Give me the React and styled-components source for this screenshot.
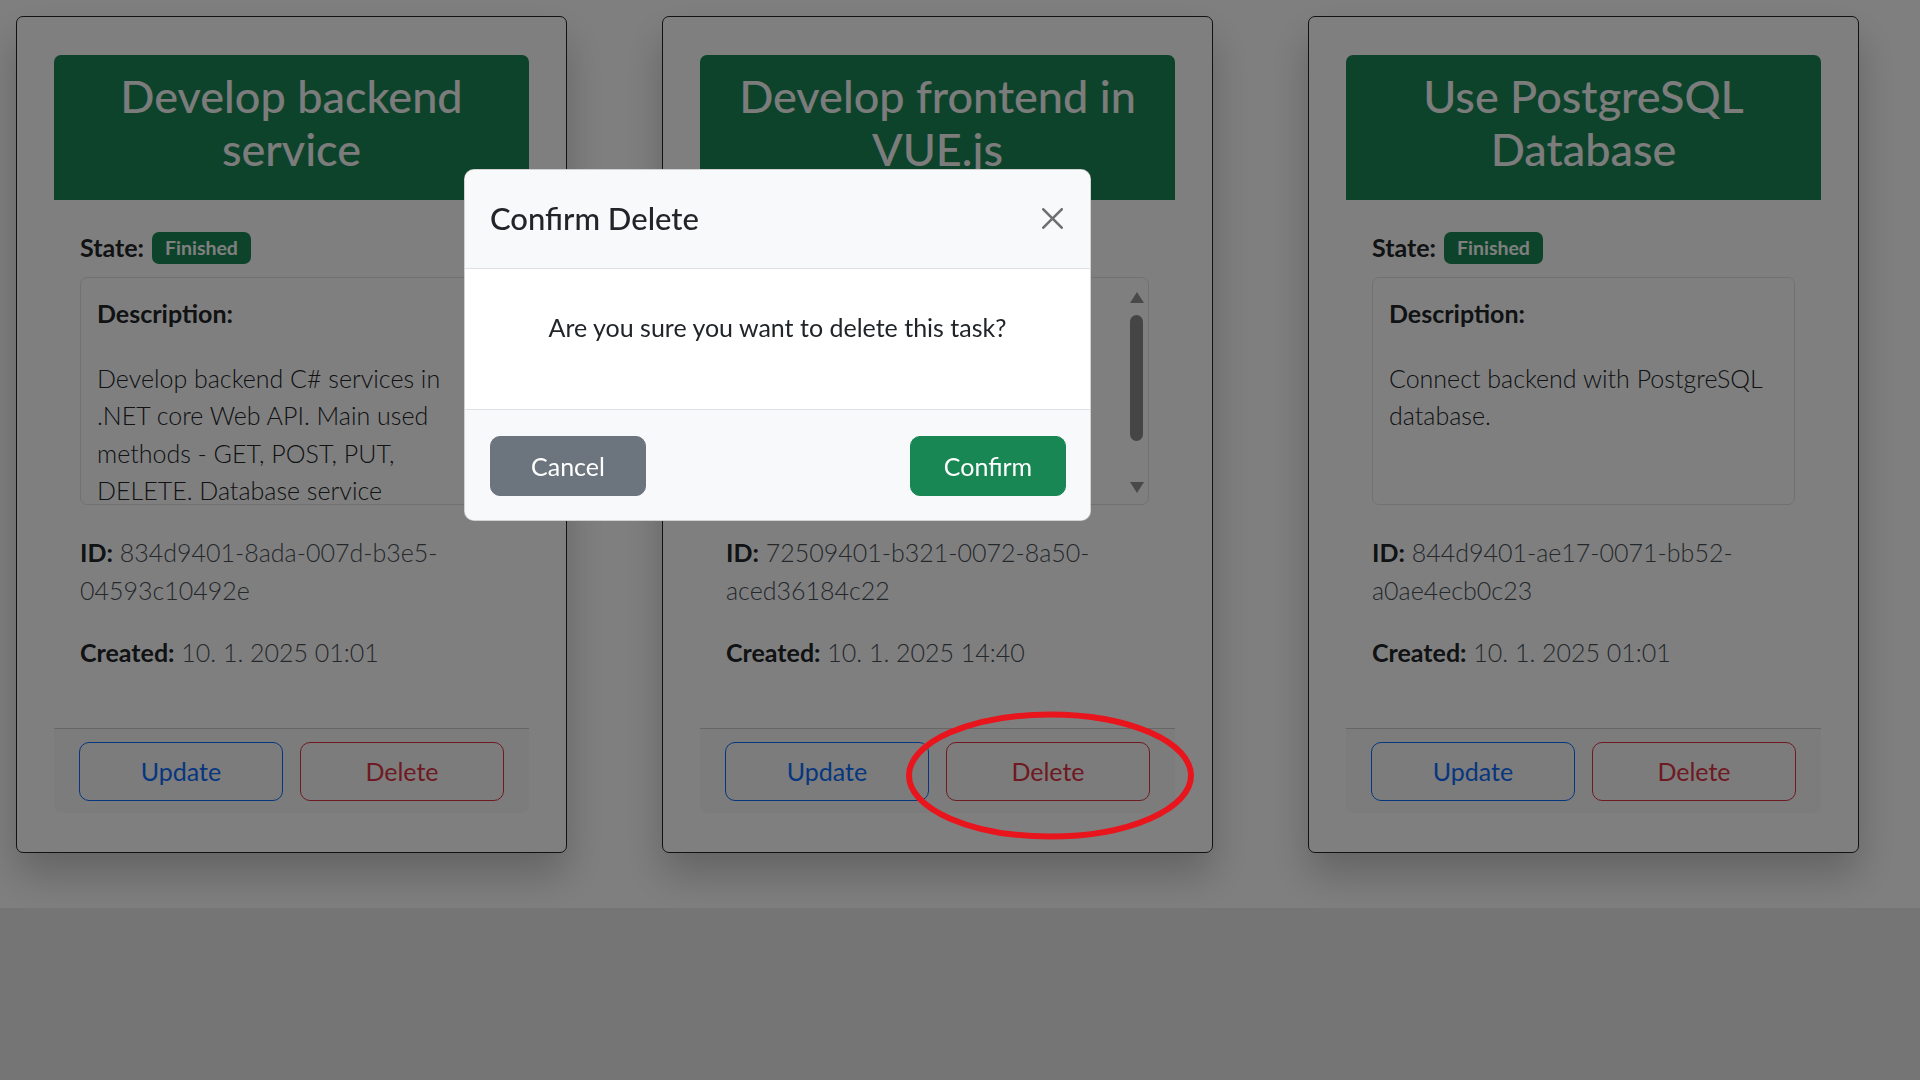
import React from "react";
import styled, { createGlobalStyle } from "styled-components";

const GlobalStyle = createGlobalStyle`
  html, body { margin: 0; padding: 0; }
  body {
    background: #ebebeb;
    font-family: Lato, "Open Sans", "Liberation Sans", sans-serif;
    color: #212529;
  }
  *, *::before, *::after { box-sizing: border-box; }
`;

const Page = styled.main`
  background: #ffffff;
  padding: 16px 0 55px 16px;
`;

const CardRow = styled.div`
  display: flex;
  align-items: flex-start;
  gap: 95px;
`;

const Card = styled.article`
  width: 551px;
  padding: 38px 37px 39px;
  background: #ffffff;
  border: 1px solid #212529;
  border-radius: 7px;
  box-shadow: 0 22px 40px rgba(0, 0, 0, 0.22);
`;

const CardHeader = styled.h2`
  margin: 0;
  padding: 15px 12px 25px;
  background: #198754;
  color: #f8f9fa;
  border-radius: 7px 7px 0 0;
  font-size: 45px;
  line-height: 52.5px;
  font-weight: 500;
  text-align: center;
`;

const CardBody = styled.div`
  padding: 29px 26px 56px;
  font-size: 25px;
  line-height: 37.5px;
  font-weight: 300;
`;

const StateRow = styled.div`
  display: flex;
  align-items: center;
  gap: 8px;
  height: 37.5px;
`;

const Label = styled.strong`
  font-weight: 700;
  color: #212529;
`;

const Badge = styled.span`
  background: #198754;
  color: #ffffff;
  font-size: 19.5px;
  font-weight: 700;
  line-height: 1;
  padding: 6px 13px;
  border-radius: 7px;
`;

const DescBox = styled.section`
  display: flex;
  height: 228px;
  margin-top: 10.5px;
  border: 1px solid #dee2e6;
  border-radius: 7px;
  overflow: hidden;
`;

const DescContent = styled.div`
  flex: 1;
  min-width: 0;
  padding: 17px 16px;
`;

const DescLabel = styled.div`
  font-weight: 700;
  margin-bottom: 27px;
`;

const DescText = styled.p`
  margin: 0;
  white-space: pre-line;
  color: #212529;
`;

const ScrollBar = styled.div`
  flex: none;
  width: 21px;
  margin-right: 1px;
  padding: 14px 0 11px;
  display: flex;
  flex-direction: column;
  align-items: center;
`;

const Arrow = styled.span`
  width: 0;
  height: 0;
  border-left: 7px solid transparent;
  border-right: 7px solid transparent;
  ${(p) =>
    p.$down
      ? "border-top: 11px solid #929292;"
      : "border-bottom: 11px solid #929292;"}
`;

const Track = styled.div`
  flex: 1;
  padding-top: 12px;
`;

const Thumb = styled.div`
  width: 13px;
  height: 126px;
  border-radius: 7px;
  background: #8a8a8a;
`;

const InfoLine = styled.p`
  margin: ${(p) => p.$gap}px 0 0;
`;

const Value = styled.span`
  color: #495057;
`;

const CardFooter = styled.footer`
  display: flex;
  gap: 17px;
  padding: 13px 25px 12px;
  background: rgba(33, 37, 41, 0.03);
  border-top: 1px solid rgba(0, 0, 0, 0.175);
  border-radius: 0 0 7px 7px;
`;

const OutlineButton = styled.button`
  flex: 1;
  height: 59.5px;
  padding: 0;
  background: transparent;
  border: 1px solid ${(p) => p.$color};
  color: ${(p) => p.$color};
  border-radius: 10px;
  font-family: inherit;
  font-size: 25px;
  font-weight: 400;
`;

const Backdrop = styled.div`
  position: fixed;
  inset: 0;
  z-index: 10;
  background: rgba(0, 0, 0, 0.5);
`;

const Dialog = styled.div`
  position: absolute;
  left: 464px;
  top: 169px;
  width: 627px;
  background: #ffffff;
  border: 1px solid rgba(0, 0, 0, 0.175);
  border-radius: 10px;
  overflow: hidden;
`;

const ModalHeader = styled.div`
  display: flex;
  align-items: center;
  justify-content: space-between;
  padding: 30px 23px 30px 25px;
  background: #f8f9fa;
  border-bottom: 1px solid #dee2e6;
`;

const ModalTitle = styled.h5`
  margin: 0;
  font-size: 31px;
  line-height: 37.5px;
  font-weight: 500;
  color: #212529;
`;

const CloseButton = styled.button`
  width: 30px;
  height: 30px;
  padding: 0;
  border: 0;
  background: transparent;
  display: flex;
  align-items: center;
  justify-content: center;
  opacity: 0.55;
`;

const ModalBody = styled.div`
  padding: 40px 25px 63px;
  text-align: center;
  font-size: 25px;
  line-height: 37.5px;
  font-weight: 400;
  color: #212529;
`;

const ModalFooter = styled.div`
  display: flex;
  justify-content: space-between;
  padding: 26px 24px 24px 25px;
  background: #f8f9fa;
  border-top: 1px solid #dee2e6;
`;

const SolidButton = styled.button`
  width: 156px;
  height: 59.5px;
  padding: 0;
  background: ${(p) => p.$bg};
  border: 1px solid ${(p) => p.$bg};
  color: #ffffff;
  border-radius: 10px;
  font-family: inherit;
  font-size: 25px;
  font-weight: 400;
`;

const Annotation = styled.svg`
  position: fixed;
  left: 903px;
  top: 708px;
  z-index: 20;
  pointer-events: none;
  overflow: visible;
`;

const tasks = [
  {
    title: "Develop backend service",
    state: "Finished",
    description:
      "Develop backend C# services in .NET core Web API. Main used methods - GET, POST, PUT, DELETE. Database service connection through Entity Framework Core.",
    id: "834d9401-8ada-007d-b3e5-04593c10492e",
    created: "10. 1. 2025 01:01",
    scroll: true,
  },
  {
    title: "Develop frontend in VUE.js",
    state: "In progress",
    description:
      "Create Vue components.\nTask list with cards.\nModal dialogs.\nForms with validation.\nRouting between pages.\nCalls to backend API.",
    id: "72509401-b321-0072-8a50-aced36184c22",
    created: "10. 1. 2025 14:40",
    scroll: true,
  },
  {
    title: "Use PostgreSQL Database",
    state: "Finished",
    description: "Connect backend with PostgreSQL database.",
    id: "844d9401-ae17-0071-bb52-a0ae4ecb0c23",
    created: "10. 1. 2025 01:01",
    scroll: false,
  },
];

function TaskCard({ task }) {
  return (
    <Card>
      <CardHeader>{task.title}</CardHeader>
      <CardBody>
        <StateRow>
          <Label>State:</Label>
          <Badge>{task.state}</Badge>
        </StateRow>
        <DescBox>
          <DescContent>
            <DescLabel>Description:</DescLabel>
            <DescText>{task.description}</DescText>
          </DescContent>
          {task.scroll && (
            <ScrollBar>
              <Arrow />
              <Track>
                <Thumb />
              </Track>
              <Arrow $down />
            </ScrollBar>
          )}
        </DescBox>
        <InfoLine $gap={29}>
          <Label>ID:</Label> <Value>{task.id}</Value>
        </InfoLine>
        <InfoLine $gap={25}>
          <Label>Created:</Label> <Value>{task.created}</Value>
        </InfoLine>
      </CardBody>
      <CardFooter>
        <OutlineButton $color="#0d6efd">Update</OutlineButton>
        <OutlineButton $color="#dc3545">Delete</OutlineButton>
      </CardFooter>
    </Card>
  );
}

function CloseIcon() {
  return (
    <svg width="21" height="21" viewBox="0 0 16 16" aria-hidden="true">
      <path
        fill="#000"
        d="M.293.293a1 1 0 0 1 1.414 0L8 6.586 14.293.293a1 1 0 1 1 1.414 1.414L9.414 8l6.293 6.293a1 1 0 0 1-1.414 1.414L8 9.414l-6.293 6.293a1 1 0 0 1-1.414-1.414L6.586 8 .293 1.707a1 1 0 0 1 0-1.414z"
      />
    </svg>
  );
}

export default function App() {
  return (
    <>
      <GlobalStyle />
      <Page>
        <CardRow>
          {tasks.map((t) => (
            <TaskCard key={t.id} task={t} />
          ))}
        </CardRow>
      </Page>
      <Backdrop>
        <Dialog role="dialog">
          <ModalHeader>
            <ModalTitle>Confirm Delete</ModalTitle>
            <CloseButton aria-label="Close">
              <CloseIcon />
            </CloseButton>
          </ModalHeader>
          <ModalBody>Are you sure you want to delete this task?</ModalBody>
          <ModalFooter>
            <SolidButton $bg="#6c757d">Cancel</SolidButton>
            <SolidButton $bg="#198754">Confirm</SolidButton>
          </ModalFooter>
        </Dialog>
      </Backdrop>
      <Annotation width="294" height="135" viewBox="0 0 294 135">
        <ellipse
          cx="147"
          cy="67.5"
          rx="141"
          ry="61"
          fill="none"
          stroke="#e8151d"
          strokeWidth="6"
        />
      </Annotation>
    </>
  );
}
